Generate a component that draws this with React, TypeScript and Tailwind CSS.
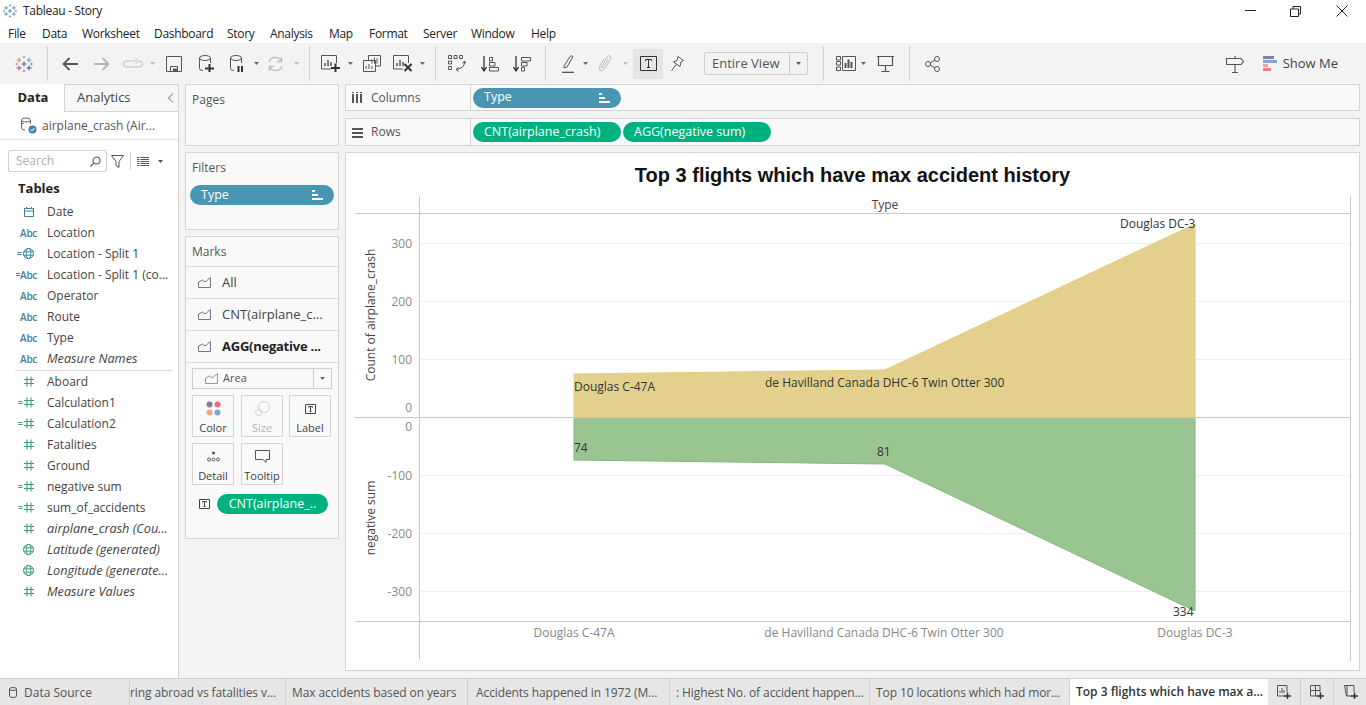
import type { ReactNode } from "react";

const MENU = [
  ["File", "w-[34px]"],
  ["Data", "w-[40px]"],
  ["Worksheet", "w-[72px]"],
  ["Dashboard", "w-[73px]"],
  ["Story", "w-[43px]"],
  ["Analysis", "w-[59px]"],
  ["Map", "w-[40px]"],
  ["Format", "w-[54px]"],
  ["Server", "w-[48px]"],
  ["Window", "w-[60px]"],
  ["Help", "w-[40px]"],
];

function Cross({ x, y, r, c, w = 1 }: { x: number; y: number; r: number; c: string; w?: number }) {
  return <path d={`M${x - r} ${y}H${x + r}M${x} ${y - r}V${y + r}`} stroke={c} strokeWidth={w} fill="none" />;
}

function Logo({ mono, className }: { mono?: string; className: string }) {
  const c = (v: string) => mono ?? v;
  return (
    <svg viewBox="0 0 18 18" className={className}>
      <Cross x={9} y={9} r={2.5} c={c("#5b6591")} w={1.2} />
      <Cross x={4} y={5} r={2.5} c={c("#e8863d")} />
      <Cross x={14} y={5} r={2.5} c={c("#6fa3b8")} />
      <Cross x={4} y={13} r={2.5} c={c("#c9405a")} />
      <Cross x={14} y={13} r={2.5} c={c("#2f5585")} />
      <Cross x={9} y={2} r={1.5} c={c("#8aa8b3")} w={0.8} />
      <Cross x={9} y={16} r={1.5} c={c("#7b82a3")} w={0.8} />
      <Cross x={1.5} y={9} r={1.5} c={c("#8aa8b3")} w={0.8} />
      <Cross x={16.5} y={9} r={1.5} c={c("#7b82a3")} w={0.8} />
    </svg>
  );
}

function Sep({ className = "" }: { className?: string }) {
  return <div className={`h-[35px] w-px shrink-0 bg-[#d4d4d4] ${className}`} />;
}

function Caret({ className = "", c = "#666" }: { className?: string; c?: string }) {
  return (
    <svg viewBox="0 0 5 3" className={`h-[3px] w-[5px] shrink-0 ${className}`}>
      <path d="M0 0H5L2.500 3Z" fill={c} />
    </svg>
  );
}

function Ic({ w, h, className = "", children }: { w: number; h: number; className?: string; children: ReactNode }) {
  return (
    <svg
      width={w}
      height={h}
      viewBox={`0 0 ${w} ${h}`}
      className={`shrink-0 ${className}`}
      fill="none"
      stroke="#555"
      strokeWidth="1"
    >
      {children}
    </svg>
  );
}

function Cylinder({ badge }: { badge: ReactNode }) {
  return (
    <>
      <ellipse cx="6" cy="3" rx="5.500" ry="2.500" />
      <path d="M0.500 3V13.500Q0.500 15.500 4 15.500M11.500 3V8" />
      {badge}
    </>
  );
}

function MiniChart({ x, y }: { x: number; y: number }) {
  return <path d={`M${x} ${y}v-3M${x + 3} ${y}v-6M${x + 6} ${y}v-4`} strokeWidth="1.500" />;
}

function Toolbar() {
  return (
    <div className="flex h-[41px] items-center bg-[#f3f3f3] pl-[15px] pr-[28px]">
      <Logo className="h-[18px] w-[18px] shrink-0" />
      <Sep className="ml-[14px]" />
      <Ic w={16} h={14} className="ml-[14px]">
        <path d="M16 7H1.500M7.500 1L1.500 7L7.500 13" stroke="#555" strokeWidth="1.800" />
      </Ic>
      <Ic w={16} h={14} className="ml-[16px]">
        <path d="M0 7H14.500M8.500 1L14.500 7L8.500 13" stroke="#b5b5b5" strokeWidth="1.800" />
      </Ic>
      <Ic w={20} h={12} className="ml-[13px]">
        <path d="M13 3H3Q0.500 3 0.500 6T3 9H16Q19.500 9 19.500 6T16 3M12.500 0.500L15.500 3L12.500 5.500" stroke="#bdbdbd" />
      </Ic>
      <Caret className="ml-[7px]" c="#bdbdbd" />
      <Ic w={16} h={16} className="ml-[11px]">
        <path d="M0.500 0.500H15.500V15.500H0.500ZM4.500 15.500V10.500H11.500V15.500" />
        <path d="M7 12.500H11V15.500H7Z" fill="#555" stroke="none" />
      </Ic>
      <Ic w={15} h={17} className="ml-[17px]">
        <Cylinder badge={<path d="M6 13.500H15M10.500 9V17" stroke="#333" strokeWidth="2" />} />
      </Ic>
      <Ic w={14} h={17} className="ml-[16px]">
        <Cylinder badge={<path d="M8.500 11V17M12 11V17" stroke="#333" strokeWidth="2" />} />
      </Ic>
      <Caret className="ml-[10px]" />
      <Ic w={17} h={16} className="ml-[8px]">
        <path d="M2 6A6.500 6.500 0 0 1 14 5M15 10A6.500 6.500 0 0 1 3 11M14.500 1V5.500H10M2.500 15V10.500H7" stroke="#bdbdbd" strokeWidth="1.300" />
      </Ic>
      <Caret className="ml-[10px]" c="#bdbdbd" />
      <Sep className="ml-[10px]" />
      <Ic w={19} h={17} className="ml-[11px]">
        <path d="M10 14H0.500V0.500H15.500V8" />
        <MiniChart x={4} y={11} />
        <path d="M10 13H19M14.500 8.500V17" stroke="#333" strokeWidth="2" />
      </Ic>
      <Caret className="ml-[8px]" />
      <Ic w={18} h={17} className="ml-[10px]">
        <path d="M5.500 5V0.500H17.500V11H13M0.500 5.500H12.500V16.500H0.500Z" fill="#f3f3f3" />
        <path d="M9 8.500v-4M11.500 8.500v-6M14 8.500v-5M3 14v-3M6 14v-5M9 14v-3" />
      </Ic>
      <Ic w={20} h={17} className="ml-[12px]">
        <path d="M10 14H0.500V0.500H15.500V8" />
        <MiniChart x={4} y={11} />
        <path d="M11.500 9L18.500 16M18.500 9L11.500 16" stroke="#333" strokeWidth="2" />
      </Ic>
      <Caret className="ml-[7px]" />
      <Sep className="ml-[10px]" />
      <Ic w={18} h={17} className="ml-[12px]">
        <path d="M0.500 0.500H3.500V3.500H0.500ZM6 0.500H9V3.500H6ZM11.500 0.500H14.500V3.500H11.500ZM0.500 6H3.500V9H0.500ZM0.500 11.500H3.500V14.500H0.500Z" />
        <path d="M16.500 6Q17.500 13 8 14.500M8 14.500L10.500 12.500M8 14.500L10.500 16.500M16.500 6L14.500 8.500M16.500 6L18 8.500" />
      </Ic>
      <Ic w={18} h={16} className="ml-[15px]">
        <path d="M3 0V14M0.500 11L3 15L5.500 11" stroke="#333" strokeWidth="1.300" />
        <path d="M8.500 1.500H11.500V5H8.500ZM8.500 6.500H14V10H8.500ZM8.500 11.500H17.500V15H8.500Z" />
      </Ic>
      <Ic w={18} h={16} className="ml-[14px]">
        <path d="M3 0V14M0.500 11L3 15L5.500 11" stroke="#333" strokeWidth="1.300" />
        <path d="M8.500 1.500H17.500V5H8.500ZM8.500 6.500H14V10H8.500ZM8.500 11.500H11.500V15H8.500Z" />
      </Ic>
      <Sep className="ml-[14px]" />
      <Ic w={12} h={18} className="ml-[16px]">
        <path d="M2 11L8 1.500Q9.500 0 11 1.500L5 12L2 13Z" />
        <path d="M0 17.500H12" strokeWidth="1.600" />
      </Ic>
      <Caret className="ml-[9px]" />
      <Ic w={13} h={17} className="ml-[11px]">
        <path
          d="M9 4.500L4.500 12Q3.500 13.500 2.800 13T3 10.500L8 2Q9.500 0 11 1T11 5L5.500 14Q3.500 17 1.500 15.500T1 10.500L5 4"
          stroke="#bdbdbd"
        />
      </Ic>
      <Caret className="ml-[11px]" c="#bdbdbd" />
      <div className="ml-[5px] flex h-[30px] w-[30px] shrink-0 items-center justify-center bg-[#e5e5e5]">
        <Ic w={17} h={15}>
          <path d="M0.500 0.500H16.500V14.500H0.500Z" stroke="#333" />
          <path d="M5.500 5V3.500H11.500V5M8.500 3.500V11.500M7 11.500H10" stroke="#333" />
        </Ic>
      </div>
      <Ic w={13} h={16} className="ml-[8px]">
        <path d="M7 0.500L12.500 4.500L10 6L9 10.500L2.500 6L6 4.500ZM5 8.500L0.500 15" />
      </Ic>
      <div className="ml-[20px] flex h-[23px] w-[104px] shrink-0 items-center rounded-[2px] border border-[#cfcfcf] text-[13px] text-[#555]">
        <div className="flex-1 pl-[7px] leading-none">Entire View</div>
        <div className="flex h-full w-[18px] items-center justify-center border-l border-[#cfcfcf]">
          <Caret c="#555" />
        </div>
      </div>
      <Sep className="ml-[15px]" />
      <Ic w={20} h={15} className="ml-[12px]">
        <path d="M0.500 0.500H4.500V4H0.500ZM0.500 5.500H4.500V9H0.500ZM0.500 11H4.500V14.500H0.500ZM6.500 0.500H19.500V14.500H6.500Z" />
        <path d="M9.500 12V7M12.500 12V3.500M15.500 12V6" strokeWidth="2" />
      </Ic>
      <Caret className="ml-[5px]" />
      <Ic w={17} h={16} className="ml-[11px]">
        <path d="M0 0.500H17M1.500 0.500V9.500H15.500V0.500M8.500 9.500V15.500M4.500 15.500H12.500" strokeWidth="1.200" />
      </Ic>
      <Sep className="ml-[15px]" />
      <Ic w={15} h={16} className="ml-[15px]">
        <circle cx="3" cy="8" r="2.500" />
        <circle cx="12" cy="3" r="2.500" />
        <circle cx="12" cy="13" r="2.500" />
        <path d="M5 7L10 4M5 9L10 12" />
      </Ic>
      <Ic w={18} h={18} className="ml-auto">
        <path d="M0.500 3.500H15L17.500 6.500L15 9.500H0.500ZM9 1V3.500M9 9.500V17M6 17.500H12" strokeWidth="1.100" />
      </Ic>
      <svg viewBox="0 0 14 16" className="ml-[19px] h-[16px] w-[14px] shrink-0">
        <rect y="0" width="11" height="3" fill="#8a7aa0" />
        <rect y="4" width="14" height="3" fill="#7fa8d0" />
        <rect y="8" width="5" height="3" fill="#f2a67c" />
        <rect y="12" width="8" height="3" fill="#f27c86" />
      </svg>
      <span className="ml-[6px] text-[13px] text-[#444]">Show Me</span>
    </div>
  );
}

function Abc({ eq }: { eq?: boolean }) {
  return (
    <span className="flex items-center text-[10px] font-semibold leading-none tracking-[-0.3px] text-[#3f7f9b]">
      {eq && <span className="text-[8px]">=</span>}
      Abc
    </span>
  );
}

function Globe({ c, eq }: { c: string; eq?: boolean }) {
  return (
    <span className="mr-[3px] flex items-center">
      {eq && <span className="mr-px text-[9px] font-semibold leading-none text-[#3f7f9b]">=</span>}
      <svg width="11" height="11" viewBox="0 0 11 11" fill="none" stroke={c} strokeWidth="1">
        <circle cx="5.500" cy="5.500" r="5" />
        <ellipse cx="5.500" cy="5.500" rx="2.300" ry="5" />
        <path d="M0.500 3.800H10.500M0.500 7.200H10.500" />
      </svg>
    </span>
  );
}

function Hash({ eq }: { eq?: boolean }) {
  return (
    <span className="mr-[3px] flex items-center">
      {eq && <span className="mr-px text-[9px] font-semibold leading-none text-[#3f9d7d]">=</span>}
      <svg width="10" height="11" viewBox="0 0 10 11" fill="none" stroke="#3f9d7d" strokeWidth="1.100">
        <path d="M3 0.500V10.500M7 0.500V10.500M0 3.500H10M0 7.500H10" />
      </svg>
    </span>
  );
}

function Calendar() {
  return (
    <svg width="10" height="10" viewBox="0 0 10 10" fill="none" stroke="#3f7f9b" strokeWidth="1" className="mr-[3px]">
      <path d="M0.500 1.500H9.500V9.500H0.500ZM0.500 4H9.500M2.500 0V2M7.500 0V2" />
    </svg>
  );
}

const DIMENSIONS: [ReactNode, string, boolean?][] = [
  [<Calendar />, "Date"],
  [<Abc />, "Location"],
  [<Globe c="#3f7f9b" eq />, "Location - Split 1"],
  [<Abc eq />, "Location - Split 1 (co..."],
  [<Abc />, "Operator"],
  [<Abc />, "Route"],
  [<Abc />, "Type"],
  [<Abc />, "Measure Names", true],
];

const MEASURES: [ReactNode, string, boolean?][] = [
  [<Hash />, "Aboard"],
  [<Hash eq />, "Calculation1"],
  [<Hash eq />, "Calculation2"],
  [<Hash />, "Fatalities"],
  [<Hash />, "Ground"],
  [<Hash eq />, "negative sum"],
  [<Hash eq />, "sum_of_accidents"],
  [<Hash />, "airplane_crash (Cou...", true],
  [<Globe c="#3f9d7d" />, "Latitude (generated)", true],
  [<Globe c="#3f9d7d" />, "Longitude (generate...", true],
  [<Hash />, "Measure Values", true],
];

function Field({ icon, name, italic }: { icon: ReactNode; name: string; italic?: boolean }) {
  return (
    <div className="flex h-[21px] items-center">
      <div className="flex w-[37px] shrink-0 items-center justify-end">{icon}</div>
      <div className={`ml-[10px] whitespace-nowrap text-[#444] ${italic ? "text-[12.7px] italic" : "text-[12px]"}`}>{name}</div>
    </div>
  );
}

function DataPane() {
  return (
    <div className="flex w-[179px] shrink-0 flex-col border-r border-[#d4d4d4] bg-white">
      <div className="flex h-[28px] items-stretch bg-[#f3f3f3]">
        <div className="flex w-[64px] items-center justify-center bg-white pl-[2px] text-[13px] font-bold text-[#222]">Data</div>
        <div className="flex flex-1 items-center justify-between border border-b-[#d4d4d4] border-l-[#d4d4d4] border-r-0 border-t-[#d4d4d4] bg-[#f7f7f7] pl-[12px] pr-[4px] text-[13px] text-[#444]">
          <span>Analytics</span>
          <svg width="7" height="10" viewBox="0 0 7 10" fill="none" stroke="#666">
            <path d="M6 0.500L1.500 5L6 9.500" />
          </svg>
        </div>
      </div>
      <div className="flex h-[28px] items-center border-b border-[#e2e2e2] pl-[20px]">
        <svg width="17" height="17" viewBox="0 0 17 17" fill="none" stroke="#666">
          <ellipse cx="6" cy="3" rx="4.500" ry="2" />
          <path d="M1.500 3V11Q1.500 13 5 13M10.500 3V7M4 6Q0 7 1.500 9" />
          <circle cx="12.500" cy="12.500" r="4" fill="#3d85b0" stroke="none" />
          <path d="M10.500 12.500L12 14L14.500 11" stroke="#fff" />
        </svg>
        <span className="ml-[5px] whitespace-nowrap text-[12px] text-[#555]">airplane_crash (Air...</span>
      </div>
      <div className="mt-[10px] flex h-[22px] items-center pl-[8px]">
        <div className="flex h-[22px] w-[99px] items-center justify-between rounded-[2px] border border-[#cfcfcf] pl-[7px] pr-[5px] text-[12px] text-[#b0b0b0]">
          <span>Search</span>
          <svg width="11" height="11" viewBox="0 0 11 11" fill="none" stroke="#555" strokeWidth="1.100">
            <circle cx="6.500" cy="4.500" r="3.500" />
            <path d="M4 7L0.500 10.500" />
          </svg>
        </div>
        <svg width="13" height="13" viewBox="0 0 13 13" fill="none" stroke="#555" className="ml-[4px]">
          <path d="M0.500 0.500H12.500L8 6.500V12.500L5 10.500V6.500Z" />
        </svg>
        <div className="ml-[6px] h-[18px] w-px bg-[#d4d4d4]" />
        <svg width="12" height="9" viewBox="0 0 12 9" stroke="#555" className="ml-[6px]">
          <path d="M0 0.500H2.500M3.500 0.500H12M0 2.500H2.500M3.500 2.500H12M0 4.500H2.500M3.500 4.500H12M0 6.500H2.500M3.500 6.500H12M0 8.500H2.500M3.500 8.500H12" />
        </svg>
        <Caret className="ml-[9px]" c="#555" />
      </div>
      <div className="mt-[6px] pl-[18px] text-[13px] font-bold leading-[20px] text-[#222]">Tables</div>
      <div className="mt-[3px]">
        {DIMENSIONS.map(([icon, name, italic]) => (
          <Field key={name} icon={icon} name={name} italic={italic} />
        ))}
      </div>
      <div className="ml-[15px] mr-[6px] mt-px h-px bg-[#d9d9d9]" />
      <div>
        {MEASURES.map(([icon, name, italic]) => (
          <Field key={name} icon={icon} name={name} italic={italic} />
        ))}
      </div>
    </div>
  );
}

function SortIcon() {
  return (
    <svg width="11" height="10" viewBox="0 0 11 10" fill="#fff" className="shrink-0">
      <rect x="0" y="0" width="3" height="2" />
      <rect x="0" y="4" width="6" height="2" />
      <rect x="0" y="8" width="11" height="2" />
    </svg>
  );
}

function Pill({ label, color, sort, className = "" }: { label: string; color: string; sort?: boolean; className?: string }) {
  return (
    <div className={`flex h-[20px] shrink-0 items-center justify-between rounded-full px-[11px] text-[12.5px] text-white ${color} ${className}`}>
      <span className="whitespace-nowrap">{label}</span>
      {sort && <SortIcon />}
    </div>
  );
}

function AreaGlyph({ c = "#777" }: { c?: string }) {
  return (
    <svg width="13" height="11" viewBox="0 0 13 11" fill="none" stroke={c} className="shrink-0">
      <path d="M0.500 10.500V5L4.500 3L7 5L12.500 0.500V10.500Z" />
    </svg>
  );
}

function MarkRow({ label, bold }: { label: string; bold?: boolean }) {
  return (
    <div className="flex h-[32px] items-center border-t border-[#dcdcdc] pl-[12px]">
      <AreaGlyph />
      <span className={`ml-[11px] whitespace-nowrap text-[13px] ${bold ? "font-bold tracking-[-0.25px] text-[#222]" : "text-[#444]"}`}>{label}</span>
    </div>
  );
}

function MarkBtn({ label, faded, children }: { label: string; faded?: boolean; children: ReactNode }) {
  return (
    <div className="flex h-[42px] w-[42px] flex-col items-center border border-[#d4d4d4]">
      <div className="flex h-[25px] items-center justify-center">{children}</div>
      <span className={`text-[11px] leading-[14px] ${faded ? "text-[#b5b5b5]" : "text-[#444]"}`}>{label}</span>
    </div>
  );
}

function TBox() {
  return (
    <svg width="11" height="10" viewBox="0 0 11 10" fill="none" stroke="#444" className="shrink-0">
      <path d="M0.500 0.500H10.500V9.500H0.500ZM3.500 3.500V2.500H7.500V3.500M5.500 2.500V7.500M4.500 7.500H6.500" />
    </svg>
  );
}

function CardsColumn() {
  return (
    <div className="ml-[6px] flex w-[154px] shrink-0 flex-col gap-[6px]">
      <div className="h-[62px] border border-[#d4d4d4] bg-[#f9f9f9] px-[6px] pt-[6px] text-[12px] text-[#555]">Pages</div>
      <div className="h-[78px] border border-[#d4d4d4] bg-[#f9f9f9] pt-[6px] text-[12px] text-[#555]">
        <div className="pl-[6px] leading-[17px]">Filters</div>
        <Pill label="Type" color="bg-[#4996b2]" sort className="mx-[4px] mt-[9px]" />
      </div>
      <div className="h-[303px] border border-[#d4d4d4] bg-[#f9f9f9]">
        <div className="flex h-[29px] items-center pl-[6px] text-[12px] text-[#555]">Marks</div>
        <MarkRow label="All" />
        <MarkRow label="CNT(airplane_c..." />
        <MarkRow label="AGG(negative ..." bold />
        <div className="border-t border-[#dcdcdc] px-[6px] pt-[5px]">
          <div className="flex h-[21px] items-center border border-[#cfcfcf] bg-[#f9f9f9]">
            <div className="flex flex-1 items-center pl-[12px] text-[11px] text-[#555]">
              <AreaGlyph c="#999" />
              <span className="ml-[5px]">Area</span>
            </div>
            <div className="flex h-full w-[18px] items-center justify-center border-l border-[#cfcfcf]">
              <Caret />
            </div>
          </div>
          <div className="mt-[6px] grid grid-cols-[49px_48px_42px] gap-y-[6px]">
            <MarkBtn label="Color">
              <svg width="15" height="15" viewBox="0 0 15 15">
                <circle cx="3.500" cy="3.500" r="3" fill="#8a7aa0" />
                <circle cx="11.500" cy="3.500" r="3" fill="#ee6f78" />
                <circle cx="3.500" cy="11.500" r="3" fill="#f2a67c" />
                <circle cx="11.500" cy="11.500" r="3" fill="#7fa8d0" />
              </svg>
            </MarkBtn>
            <MarkBtn label="Size" faded>
              <svg width="15" height="15" viewBox="0 0 15 15" fill="none" stroke="#cfcfcf">
                <circle cx="9" cy="6" r="5.500" />
                <circle cx="3.500" cy="11.500" r="3" />
              </svg>
            </MarkBtn>
            <MarkBtn label="Label">
              <TBox />
            </MarkBtn>
            <MarkBtn label="Detail">
              <svg width="13" height="11" viewBox="0 0 13 11" fill="none" stroke="#555">
                <circle cx="6.500" cy="2" r="1.500" fill="#555" stroke="none" />
                <circle cx="2" cy="8.500" r="1.500" />
                <circle cx="6.500" cy="8.500" r="1.500" />
                <circle cx="11" cy="8.500" r="1.500" />
              </svg>
            </MarkBtn>
            <MarkBtn label="Tooltip">
              <svg width="15" height="13" viewBox="0 0 15 13" fill="none" stroke="#555">
                <path d="M0.500 0.500H14.500V9.500H11V12.500L8 9.500H0.500Z" />
              </svg>
            </MarkBtn>
          </div>
          <div className="mt-[9px] flex items-center pl-[7px]">
            <TBox />
            <Pill label="CNT(airplane_.." color="bg-[#00b180]" className="ml-[7px] w-[111px] justify-center px-[10px]" />
          </div>
        </div>
      </div>
    </div>
  );
}

function Chart() {
  const grid = "#f0f0f0";
  const axis = "#c8c8c8";
  return (
    <svg viewBox="346 196 1013 474" className="block h-[474px] w-[1013px]">
      {[243.5, 301.5, 359.5, 475.5, 533.5, 591.5].map((y) => (
        <line key={y} x1="420" x2="1350" y1={y} y2={y} stroke={grid} />
      ))}
      <polygon points="574,374 885,370 1195,224 1195,417 574,417" fill="#e3d08d" stroke="#e6cb7c" />
      <polygon points="574,417.500 1195,417.500 1195,611 885,464 574,460" fill="#9bc590" stroke="#82b87c" />
      <line x1="355" x2="1350" y1="213.500" y2="213.500" stroke={axis} />
      <line x1="355" x2="1350" y1="417.500" y2="417.500" stroke={axis} />
      <line x1="355" x2="1350" y1="621.500" y2="621.500" stroke={axis} />
      <line x1="419.500" x2="419.500" y1="196" y2="660" stroke={axis} />
      <line x1="1350.500" x2="1350.500" y1="196" y2="661" stroke={axis} />

      <g className="fill-[#888] text-[12px]" textAnchor="end">
        <text x="412" y="248">300</text>
        <text x="412" y="306">200</text>
        <text x="412" y="364">100</text>
        <text x="412" y="412">0</text>
        <text x="412" y="431">0</text>
        <text x="412" y="480">-100</text>
        <text x="412" y="538">-200</text>
        <text x="412" y="596">-300</text>
      </g>
      <g className="fill-[#888] text-[12px]" textAnchor="middle">
        <text x="574" y="637">Douglas C-47A</text>
        <text x="884" y="637">de Havilland Canada DHC-6 Twin Otter 300</text>
        <text x="1195" y="637">Douglas DC-3</text>
      </g>
      <text x="885" y="209" textAnchor="middle" className="fill-[#444] text-[12px]">Type</text>
      <g className="fill-[#444] text-[12px]" textAnchor="middle">
        <text transform="translate(375 315) rotate(-90)">Count of airplane_crash</text>
        <text transform="translate(375 518) rotate(-90)">negative sum</text>
      </g>
      <g className="fill-[#333] text-[12px]">
        <text x="574" y="391">Douglas C-47A</text>
        <text x="765" y="387">de Havilland Canada DHC-6 Twin Otter 300</text>
        <text x="1120" y="228">Douglas DC-3</text>
        <text x="574" y="452">74</text>
        <text x="877" y="456">81</text>
        <text x="1173" y="616">334</text>
      </g>
    </svg>
  );
}

function ViewArea() {
  return (
    <div className="ml-[6px] flex w-[1015px] shrink-0 flex-col">
      <div className="flex h-[27px] items-center border border-[#d4d4d4] bg-[#f9f9f9]">
        <div className="flex w-[125px] shrink-0 items-center border-r border-[#d4d4d4] pl-[6px] text-[12px] text-[#555]">
          <svg width="11" height="11" viewBox="0 0 11 11" className="shrink-0" fill="#555">
            <rect x="0" y="0" width="2" height="1" />
            <rect x="4" y="0" width="2" height="1" />
            <rect x="8" y="0" width="2" height="1" />
            <rect x="0" y="2" width="2" height="9" />
            <rect x="4" y="2" width="2" height="9" />
            <rect x="8" y="2" width="2" height="9" />
          </svg>
          <span className="ml-[8px] leading-[26px]">Columns</span>
        </div>
        <Pill label="Type" color="bg-[#4996b2]" sort className="ml-[2px] w-[148px]" />
      </div>
      <div className="mt-[7px] flex h-[28px] items-center border border-[#d4d4d4] bg-[#f9f9f9]">
        <div className="flex w-[125px] shrink-0 items-center border-r border-[#d4d4d4] pl-[6px] text-[12px] text-[#555]">
          <svg width="11" height="11" viewBox="0 0 11 11" className="shrink-0" fill="#555">
            <rect x="0" y="1" width="11" height="2" />
            <rect x="0" y="5" width="11" height="2" />
            <rect x="0" y="9" width="11" height="2" />
          </svg>
          <span className="ml-[8px] leading-[26px]">Rows</span>
        </div>
        <Pill label="CNT(airplane_crash)" color="bg-[#00b180]" className="ml-[2px] w-[148px]" />
        <Pill label="AGG(negative sum)" color="bg-[#00b180]" className="ml-[2px] w-[148px]" />
      </div>
      <div className="mt-[6px] h-[519px] border border-[#d4d4d4] bg-white">
        <div className="flex h-[43px] items-center justify-center font-['Liberation_Sans',sans-serif] text-[20px] font-bold text-[#111]">
          Top 3 flights which have max accident history
        </div>
        <Chart />
      </div>
    </div>
  );
}

function SheetTab({ label, className }: { label: string; className: string }) {
  return (
    <div className={`flex shrink-0 items-center overflow-hidden whitespace-nowrap border-r border-[#d0d0d0] pt-px text-[12px] tracking-[-0.1px] text-[#555] ${className}`}>
      {label}
    </div>
  );
}

function AddTab({ children }: { children: ReactNode }) {
  return (
    <div className="flex w-[33px] shrink-0 items-center justify-center border-r border-[#d0d0d0] last:border-r-0">{children}</div>
  );
}

function BottomTabs() {
  return (
    <div className="flex h-[27px] border-t border-[#d0d0d0] bg-[#e6e6e6]">
      <div className="flex w-[130px] shrink-0 items-center border-r border-[#d0d0d0] pl-[9px] pt-px text-[12px] text-[#555]">
        <svg width="8" height="11" viewBox="0 0 8 11" fill="none" stroke="#555" className="shrink-0">
          <path d="M0.500 2V9Q0.500 10.500 4 10.500T7.500 9V2M0.500 2Q0.500 0.500 4 0.500T7.500 2T4 3.500T0.500 2" />
        </svg>
        <span className="ml-[7px]">Data Source</span>
      </div>
      <SheetTab label="ring abroad vs fatalities v..." className="w-[156px]" />
      <SheetTab label="Max accidents based on years" className="w-[182px] pl-[6px]" />
      <SheetTab label="Accidents happened in 1972 (M..." className="w-[202px] pl-[8px]" />
      <SheetTab label=": Highest No. of accident happen..." className="w-[200px] pl-[6px]" />
      <SheetTab label="Top 10 locations which had mor..." className="w-[200px] pl-[6px]" />
      <div className="flex w-[198px] shrink-0 items-center whitespace-nowrap bg-white pl-[6px] text-[12px] font-semibold text-[#333]">
        Top 3 flights which have max a...
      </div>
      <AddTab>
        <Ic w={14} h={14}>
          <path d="M8 11H0.500V0.500H10V7" />
          <path d="M3 8V6M5 8V3M7 8V5" />
          <path d="M7 11H14M10.500 7.500V14" stroke="#333" strokeWidth="1.500" />
        </Ic>
      </AddTab>
      <AddTab>
        <Ic w={14} h={14}>
          <path d="M8 11H0.500V0.500H10V7M0.500 5.500H10M5.500 0.500V11" />
          <path d="M7 11H14M10.500 7.500V14" stroke="#333" strokeWidth="1.500" />
        </Ic>
      </AddTab>
      <AddTab>
        <Ic w={14} h={14}>
          <path d="M8 11H2.500L0.500 0.500H10V7M3 0.500V11" />
          <path d="M7 11H14M10.500 7.500V14" stroke="#333" strokeWidth="1.500" />
        </Ic>
      </AddTab>
    </div>
  );
}

export default function App() {
  return (
    <div className="flex h-screen w-full flex-col overflow-hidden bg-white font-['Open_Sans','Liberation_Sans',sans-serif]">
      <div className="flex h-[22px] items-center pl-[3px]">
        <Logo mono="#3a8bb5" className="h-[14px] w-[14px]" />
        <span className="ml-[6px] text-[12px] tracking-[-0.3px] text-[#222]">Tableau - Story</span>
        <Ic w={11} h={2} className="ml-auto">
          <path d="M0 0.500H11" stroke="#222" />
        </Ic>
        <Ic w={11} h={11} className="ml-[34px]">
          <path d="M0.500 3H8.500V10.500H0.500ZM3 3V0.500H10.500V8H8.500" stroke="#222" />
        </Ic>
        <Ic w={12} h={12} className="ml-[35px] mr-[18px]">
          <path d="M0.500 0.500L11.500 11.500M11.500 0.500L0.500 11.500" stroke="#222" />
        </Ic>
      </div>
      <div className="flex h-[21px] items-center pl-[8px] pt-[2px] text-[12px] tracking-[-0.3px] text-[#222]">
        {MENU.map(([label, width]) => (
          <div key={label} className={width}>
            {label}
          </div>
        ))}
      </div>
      <Toolbar />
      <div className="flex h-[594px] bg-[#f3f3f3]">
        <DataPane />
        <CardsColumn />
        <ViewArea />
      </div>
      <BottomTabs />
    </div>
  );
}
